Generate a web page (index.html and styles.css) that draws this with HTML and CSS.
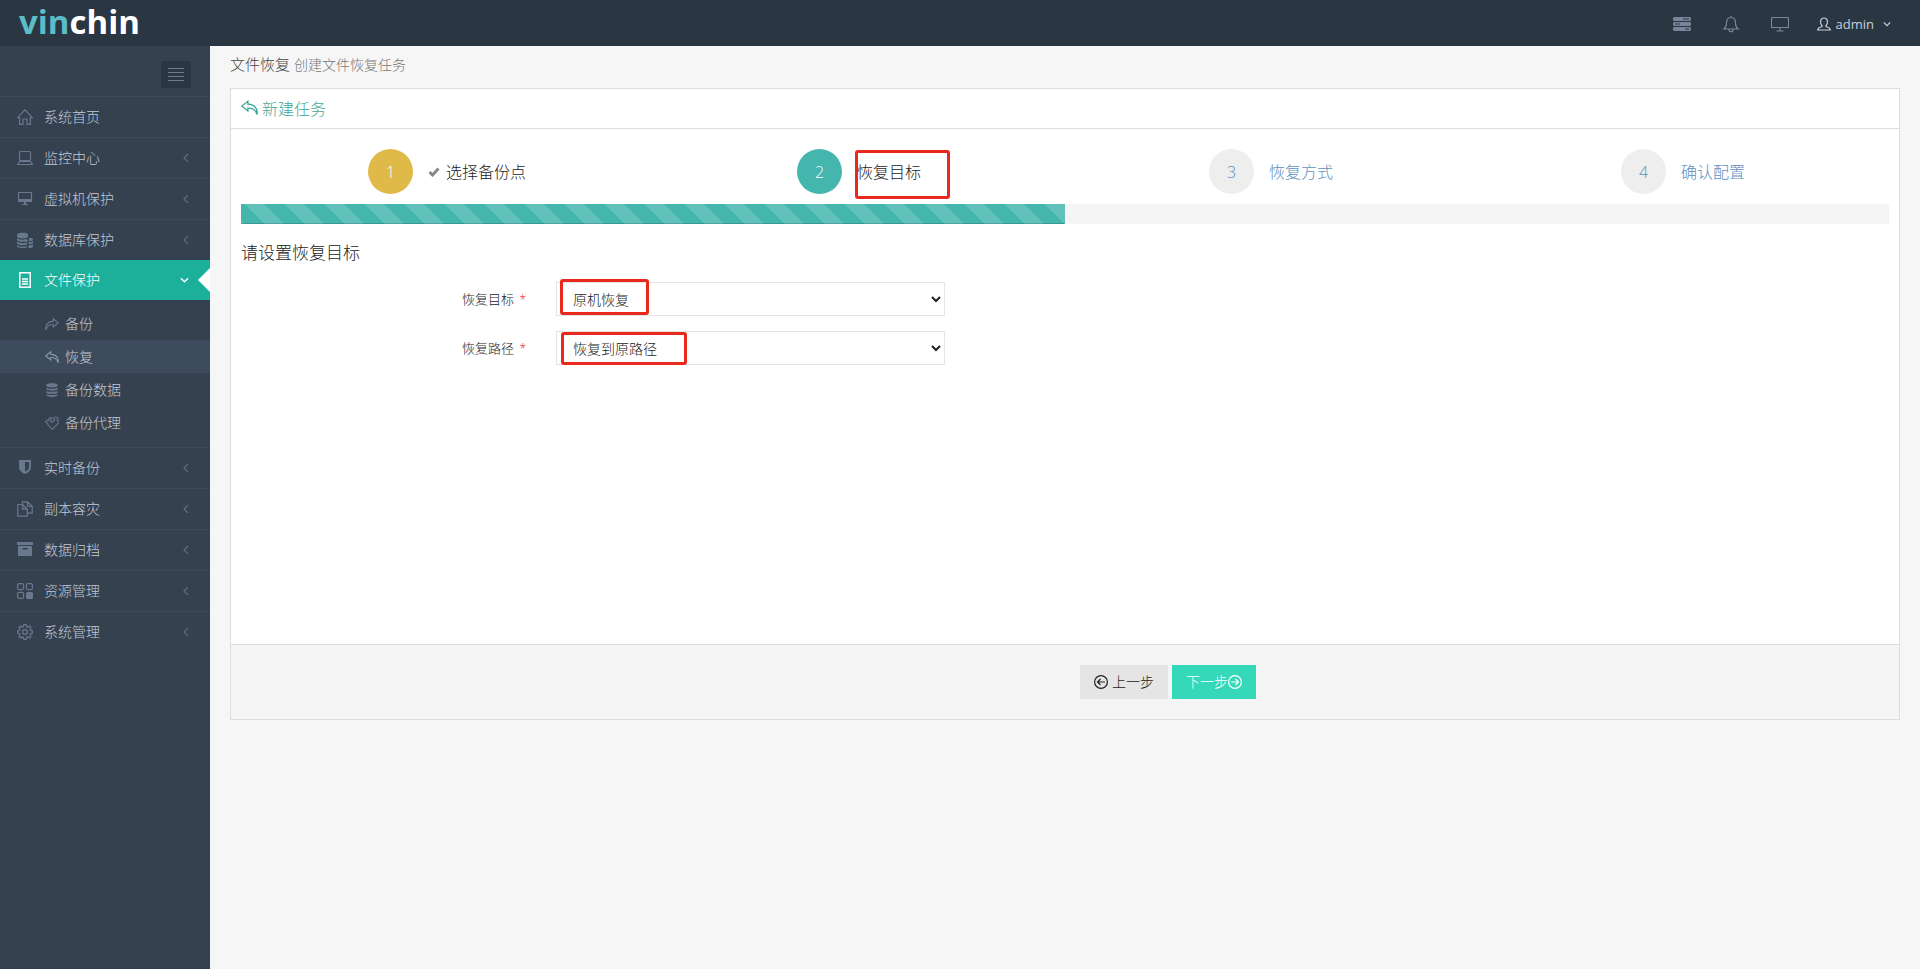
FILE: index.html
```html
<!DOCTYPE html>
<html lang="zh-CN">
<head>
<meta charset="utf-8">
<title>文件恢复</title>
<link rel="stylesheet" href="styles.css">
</head>
<body>
<svg class="sprite" aria-hidden="true">
  <symbol id="i-left" viewBox="0 0 6 10"><path d="M5 1 1 5l4 4"/></symbol>
  <symbol id="i-down" viewBox="0 0 10 6"><path d="m1 1 4 4 4-4"/></symbol>
  <symbol id="i-reply" viewBox="0 0 16 14"><path d="M6.500 1 .800 5.600l5.700 4.600V7.600c4-.2 7 1.200 8.300 5.400h.5c.2-5.600-3.300-8.800-8.800-9.300z"/></symbol>
</svg>
<header class="topbar">
  <a class="logo" href="#"><span class="logo-accent">vin</span>chin</a>
  <nav class="top-actions">
    <a href="#" aria-label="任务"><svg class="icon-18" viewBox="0 0 18 14"><path class="solid" d="M1 0h16l1 1v2l-1 1H1L0 3V1zM1 5h16l1 1v2l-1 1H1L0 8V6zM1 10h16l1 1v2l-1 1H1l-1-1v-2z"/><path class="cut" d="M10 2h6M2 7h5M12 12h4"/></svg></a>
    <a href="#" aria-label="通知"><svg class="icon-18" viewBox="0 0 18 18"><path d="M9 1v1M2 14c2-1.500 2.500-3.500 2.500-6C4.500 4.500 6 2.500 9 2.500S13.500 4.500 13.500 8c0 2.500.5 4.500 2.500 6zM7 14.500c0 3 4 3 4 0"/></svg></a>
    <a href="#" aria-label="大屏"><svg class="icon-18" viewBox="0 0 18 16"><path d="M1.500 1.500h15a1 1 0 0 1 1 1v9h-17v-9a1 1 0 0 1 1-1zM9 12v2.500M5.500 15h7"/></svg></a>
    <a class="user" href="#"><svg class="icon-14" viewBox="0 0 14 14"><path d="M5 8.500C2.700 6 3 1 7 1s4.300 5 2 7.500v1c1 .8 3.600.6 4.400 3.500H.6C1.400 10.100 4 10.300 5 9.500z"/></svg><span>admin</span><svg class="caret"><use href="#i-down"/></svg></a>
  </nav>
</header>
<div class="layout">
  <aside class="sidebar">
    <div class="toggle-row"><button class="toggle" aria-label="折叠菜单"><span></span><span></span><span></span><span></span></button></div>
    <ul class="menu">
      <li><a href="#"><svg viewBox="0 0 16 16"><path d="M.6 8.700 8 .8l7.400 7.900h-2v6.700H10V10H6v5.400H2.600V8.700z"/></svg><span>系统首页</span></a></li>
      <li><a href="#"><svg viewBox="0 0 16 16"><path d="M3.500 1.500h9a1 1 0 0 1 1 1v7a1 1 0 0 1-1 1h-9a1 1 0 0 1-1-1v-7a1 1 0 0 1 1-1zM2.500 11.500h11l2 3H.5z"/></svg><span>监控中心</span><svg class="chevron"><use href="#i-left"/></svg></a></li>
      <li><a href="#"><svg viewBox="0 0 16 16"><path d="M1.500 1.500h13v9h-13z"/><path class="solid" d="M1 8h14v3H1zM7 11h2v2h2v1H5v-1h2z"/></svg><span>虚拟机保护</span><svg class="chevron"><use href="#i-left"/></svg></a></li>
      <li><a href="#"><svg viewBox="0 0 16 16"><path class="solid" d="M0 2.500C0 0 11 0 11 2.500v2C11 7 0 7 0 4.500zM0 6c2 2 7 2 9 1l2 1v1C8 10.500 1 10 0 8zM0 9.500c2 2 8 2 10 1v2C7 13.500 1 13.500 0 11.500zM0 13c2 2 8 2 10 1v1.500C7 16.500 0 16 0 14zM12 6c3 0 4 .5 4 1.500S14 9 12 9zM11.500 10c2 0 3.500 0 4.500-1v2c-1 1-3 1-4.500 1zM11.500 13c2 0 3.500 0 4.500-1v3c-1 1-3 1-4.500 1z"/></svg><span>数据库保护</span><svg class="chevron"><use href="#i-left"/></svg></a></li>
      <li class="active"><a href="#"><svg class="file" viewBox="0 0 16 16"><path d="M2.800.8h10.400v14.400H2.800zM5 7h6M5 9.500h6M5 12h6"/></svg><span>文件保护</span><svg class="caret"><use href="#i-down"/></svg></a>
        <ul class="submenu">
          <li><a href="#"><svg class="flip"><use href="#i-reply"/></svg><span>备份</span></a></li>
          <li class="current"><a href="#"><svg><use href="#i-reply"/></svg><span>恢复</span></a></li>
          <li><a href="#"><svg viewBox="0 0 16 16"><path class="solid" d="M1.500 2.500c0-3 13-3 13 0v1c0 2-13 2-13 0zM1.500 5.500c2 1.500 11 1.500 13 0v2c-2 1.800-11 1.800-13 0zM1.500 9c2 1.500 11 1.500 13 0v2c-2 1.800-11 1.800-13 0zM1.500 12.500c2 1.500 11 1.500 13 0v1.500c-2 2.500-11 2.500-13 0z"/></svg><span>备份数据</span></a></li>
          <li><a href="#"><svg viewBox="0 0 16 16"><path d="M8.500 15.300 3.300 10 3 8.300.8 7C.6 5.500 2 4.800 3.500 5.200 4 2.500 5.500 1.500 7.500 2L6 5.500l2 1.700 3.200-2.700L9.500 3C10.500.8 14.500.3 15.300 3L13.500 4.500l1.800 1c.2 1.500-.4 3-1.300 4z"/></svg><span>备份代理</span></a></li>
        </ul>
      </li>
      <li><a href="#"><svg viewBox="0 0 16 16"><path class="solid" fill-rule="evenodd" d="M2 0h12v7c0 3-2 5.500-6 7-4-1.500-6-4-6-7zM8 2v9.500c2.500-1 4-2.500 4-4.500V2z"/></svg><span>实时备份</span><svg class="chevron"><use href="#i-left"/></svg></a></li>
      <li><a href="#"><svg viewBox="0 0 16 16"><path d="M5.500 3.500H.8v11.700h9.400V8L5.500 3.500v4.700h4.700M5.500 3.500V.8h5l4.700 4.400v7h-4.500M10.500.8v4.400h4.700"/></svg><span>副本容灾</span><svg class="chevron"><use href="#i-left"/></svg></a></li>
      <li><a href="#"><svg viewBox="0 0 16 16"><path class="solid" fill-rule="evenodd" d="M0 0h16v3H0zM1 4h14v10H1zM5.500 6v1.500h5V6z"/></svg><span>数据归档</span><svg class="chevron"><use href="#i-left"/></svg></a></li>
      <li><a href="#"><svg viewBox="0 0 16 16"><rect x=".6" y=".6" width="6" height="6" rx="1.500"/><rect x="9.400" y=".6" width="6" height="6" rx="1.500"/><rect x=".6" y="9.400" width="6" height="6" rx="1.500"/><rect class="solid" x="9" y="9" width="7" height="7" rx="1.500"/></svg><span>资源管理</span><svg class="chevron"><use href="#i-left"/></svg></a></li>
      <li><a href="#"><svg viewBox="0 0 16 16"><path d="m6.800.7-.5 2-1 .4-1.800-1.100L2 3.500l1.100 1.800-.4 1-2 .5v2.400l2 .5.4 1L2 12.500 3.500 14l1.800-1.100 1 .4.5 2h2.400l.5-2 1-.4 1.800 1.100 1.500-1.500-1.100-1.800.4-1 2-.5V6.800l-2-.5-.4-1L14 3.500 12.500 2l-1.800 1.100-1-.4-.5-2z"/><circle cx="8" cy="8" r="2.400"/></svg><span>系统管理</span><svg class="chevron"><use href="#i-left"/></svg></a></li>
    </ul>
  </aside>
  <main class="content">
    <h1 class="page-title">文件恢复 <small>创建文件恢复任务</small></h1>
    <section class="panel">
      <h2 class="panel-title"><svg><use href="#i-reply"/></svg><span>新建任务</span></h2>
      <div class="panel-body">
        <ol class="steps">
          <li class="done"><a href="#"><span class="num">1</span><span class="step-name"><svg class="check" viewBox="0 0 12 10"><path d="m1.500 5 3 3 6-6.500"/></svg>选择备份点</span></a></li>
          <li class="now"><a href="#"><span class="num">2</span><span class="step-name">恢复目标<i class="mark mark-step"></i></span></a></li>
          <li><a href="#"><span class="num">3</span><span class="step-name">恢复方式</span></a></li>
          <li><a href="#"><span class="num">4</span><span class="step-name">确认配置</span></a></li>
        </ol>
        <div class="progress"><div class="bar"></div></div>
        <h3 class="section-title">请设置恢复目标</h3>
        <form id="restore" class="form">
          <div class="field">
            <label for="target">恢复目标 <b>*</b></label>
            <div class="control"><select id="target"><option>原机恢复</option></select><i class="mark mark-target"></i></div>
          </div>
          <div class="field">
            <label for="path">恢复路径 <b>*</b></label>
            <div class="control"><select id="path"><option>恢复到原路径</option></select><i class="mark mark-path"></i></div>
          </div>
        </form>
      </div>
      <footer class="panel-actions">
        <button class="btn btn-prev" type="button"><svg viewBox="0 0 14 14"><circle cx="7" cy="7" r="6.400"/><path d="M11 7H3.500M6.500 4l-3 3 3 3"/></svg><span>上一步</span></button>
        <button class="btn btn-next" type="submit" form="restore"><span>下一步</span><svg viewBox="0 0 14 14"><circle cx="7" cy="7" r="6.400"/><path d="M3 7h7.500M7.500 4l3 3-3 3"/></svg></button>
      </footer>
    </section>
  </main>
</div>
</body>
</html>
```
FILE: styles.css
```css
* { box-sizing: border-box; }
body {
  margin: 0;
  min-height: 100vh;
  display: flex;
  flex-direction: column;
  background: #f6f6f6;
  color: #222;
  font: 300 14px/20px "Open Sans", "Noto Sans CJK SC", sans-serif;
}
a { color: inherit; text-decoration: none; }
ul, ol { margin: 0; padding: 0; list-style: none; }
svg { fill: none; stroke: currentColor; stroke-width: 1.2; flex: none; }
.sprite { position: absolute; width: 0; height: 0; }
.solid { fill: currentColor; stroke: none; }
.cut { stroke: #2b3643; }

.topbar {
  height: 46px;
  padding: 0 29px 0 19px;
  display: flex;
  justify-content: space-between;
  background: #2b3643;
}
.logo { color: #fff; font: 700 33px/44px "Open Sans", sans-serif; }
.logo-accent { color: #5bbdc8; }
.top-actions { display: flex; align-items: center; gap: 31px; color: #79869a; padding-top: 2px; }
.top-actions a { display: flex; }
.icon-18 { width: 18px; height: 18px; }
.icon-14 { width: 14px; height: 14px; }
.top-actions .user { align-items: center; gap: 5px; color: #c6cfda; font-size: 13px; font-weight: 400; margin-left: -3px; }
.caret { width: 9px; height: 6px; stroke-width: 1.6; }
.user .caret { width: 8px; margin-left: 4px; }

.layout { flex: 1; display: flex; }
.sidebar { width: 210px; flex: none; background: #364150; color: #c2cad6; }
.toggle-row { height: 50px; padding: 15px 19px 0; display: flex; justify-content: flex-end; }
.toggle {
  width: 30px;
  height: 27px;
  border: 0;
  padding: 0 7px;
  background: #2b3643;
  display: flex;
  flex-direction: column;
  justify-content: center;
  gap: 3px;
}
.toggle span { height: 1px; background: #6f7c8e; }
.menu > li { border-top: 1px solid #3d4957; }
.menu > li > a {
  height: 40px;
  padding: 0 21px 0 17px;
  display: flex;
  align-items: center;
  gap: 11px;
  position: relative;
}
.menu a > svg:first-child { width: 16px; height: 16px; color: #69788c; }
.menu a > .chevron, .menu a > .caret { margin-left: auto; color: #606c7d; }
.chevron { width: 6px; height: 10px; }
.menu > .active { border-top: 0; }
.active > a { background: #1caf9a; color: #fff; }
.menu .active > a > svg:first-child, .menu .active > a > .caret { color: #fff; }
.file { stroke-width: 1.5; }
.active > a::after {
  content: "";
  position: absolute;
  right: 0;
  top: 8px;
  border: 12px solid transparent;
  border-left: 0;
  border-right-color: #fff;
}
.submenu { padding: 7px 0 8px; }
.submenu a { height: 33px; padding-left: 45px; display: flex; align-items: center; gap: 6px; }
.submenu a > svg:first-child { width: 14px; height: 14px; }
.submenu .current { background: #3e4b5c; }
.menu .current a > svg:first-child { color: #8e9bae; }
.flip { transform: scaleX(-1); }

.content { flex: 1; min-width: 0; padding: 8px 20px 20px; }
.page-title { margin: 0 0 13px; font-size: 15px; line-height: 20px; font-weight: 300; color: #444; }
.page-title small { font-size: 14px; color: #777; }
.panel { border: 1px solid #ddd; background: #fff; }
.panel-title {
  height: 40px;
  margin: 0;
  padding: 0 10px;
  display: flex;
  align-items: center;
  gap: 4px;
  border-bottom: 1px solid #ddd;
  color: #3fa796;
  font-size: 16px;
  font-weight: 300;
}
.panel-title svg { width: 17px; height: 15px; margin-bottom: 2px; }
.panel-body { min-height: 515px; padding: 20px 10px; }
.steps { display: grid; grid-template-columns: repeat(4, 1fr); margin-bottom: 10px; }
.steps a { display: flex; align-items: center; justify-content: center; gap: 15px; color: #5b8fc0; font-size: 16px; }
.num {
  width: 45px;
  height: 45px;
  border-radius: 50%;
  display: grid;
  place-items: center;
  background: #eee;
}
.step-name { position: relative; display: flex; align-items: center; gap: 6px; }
.steps .done a, .steps .now a { color: #222; }
.steps .done .num { background: #dfba49; color: #fff; }
.steps .now .num { background: #44b6ae; color: #fff; }
.check { width: 12px; height: 10px; stroke: #888; stroke-width: 3; }
.progress { height: 20px; background: #f5f5f5; }
.bar {
  width: 50%;
  height: 100%;
  background: #44b6ae linear-gradient(45deg, rgba(255,255,255,.15) 25%, transparent 25%, transparent 50%, rgba(255,255,255,.15) 50%, rgba(255,255,255,.15) 75%, transparent 75%) 4px 0 / 40px 40px;
  box-shadow: inset 0 -1px 0 rgba(0,0,0,.15);
}
.section-title { margin: 17px 0; font-size: 17px; line-height: 24px; font-weight: 300; }
.form { display: grid; gap: 15px; }
.field { display: flex; align-items: center; gap: 30px; }
.field label { width: 285px; text-align: right; font-size: 13px; }
.field b { margin-left: 2px; color: #e02222; font-size: 12px; font-weight: 300; }
.control { position: relative; width: calc(25% - 23px); }
select {
  display: block;
  width: 100%;
  height: 34px;
  padding: 6px 12px;
  border: 1px solid #e5e5e5;
  border-radius: 0;
  background: #fff;
  color: #222;
  font: inherit;
}
.mark { position: absolute; border: 3px solid #e8291c; border-radius: 3px; }
.mark-step { left: -2px; top: -12px; width: 95px; height: 49px; }
.mark-target { left: 4px; top: -3px; width: 89px; height: 36px; }
.mark-path { left: 5px; top: 1px; width: 126px; height: 33px; }
.panel-actions {
  display: flex;
  gap: 4px;
  padding: 20px 0 20px calc(50% + 15px);
  border-top: 1px solid #ddd;
  background: #f5f5f5;
}
.btn {
  height: 34px;
  padding: 0 14px;
  border: 0;
  display: flex;
  align-items: center;
  font: inherit;
}
.btn svg { width: 14px; height: 14px; }
.btn-prev { gap: 4px; background: #e5e5e5; color: #222; }
.btn-next { background: #35d8b8; color: #fff; }
```
